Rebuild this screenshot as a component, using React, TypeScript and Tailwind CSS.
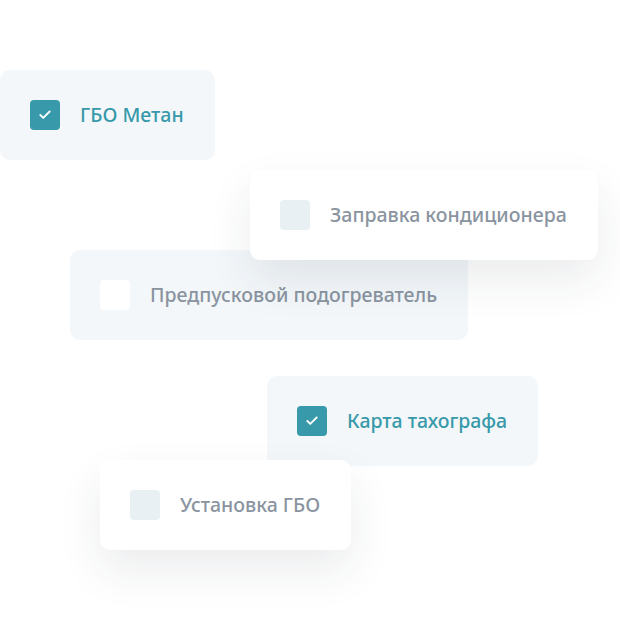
import React from 'react';
import { Check } from 'lucide-react';

interface Option {
  label: string;
  checked: boolean;
  raised: boolean;
  pos: string;
}

// cards sit on a free canvas and overlap each other, so they are placed by coordinates
const options: Option[] = [
  { label: 'ГБО Метан', checked: true, raised: false, pos: 'left-0 top-[70px]' },
  { label: 'Заправка кондиционера', checked: false, raised: true, pos: 'left-[250px] top-[170px] z-10' },
  { label: 'Предпусковой подогреватель', checked: false, raised: false, pos: 'left-[70px] top-[250px]' },
  { label: 'Карта тахографа', checked: true, raised: false, pos: 'left-[267px] top-[376px]' },
  { label: 'Установка ГБО', checked: false, raised: true, pos: 'left-[100px] top-[460px] z-10' },
];

function OptionCard({ label, checked, raised, pos }: Option) {
  return (
    <div
      className={`absolute ${pos} h-[90px] flex items-center gap-[20px] pl-[30px] pr-[31px] rounded-[10px] ${
        raised ? 'bg-white shadow-[0_20px_45px_rgba(30,40,50,0.09)]' : 'bg-[#f3f7fa]'
      }`}
    >
      <span
        className={`w-[30px] h-[30px] rounded-[4px] flex items-center justify-center shrink-0 ${
          checked ? 'bg-[#3799a9]' : raised ? 'bg-[#e8f0f4]' : 'bg-white'
        }`}
      >
        {checked && <Check className="w-[14px] h-[14px] text-white" strokeWidth={3.2} />}
      </span>
      <span
        className={`text-[19.5px] font-medium whitespace-nowrap ${
          checked ? 'text-[#3799a9]' : 'text-[#8a94a0]'
        }`}
      >
        {label}
      </span>
    </div>
  );
}

export default function App() {
  return (
    <div className="relative w-[620px] h-[620px] bg-white overflow-hidden font-['Noto_Sans',sans-serif]">
      {options.map((o) => (
        <OptionCard key={o.label} {...o} />
      ))}
    </div>
  );
}
